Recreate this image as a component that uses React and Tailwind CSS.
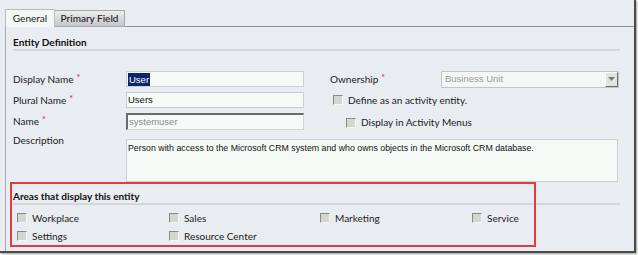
const labelFont = { fontFamily: 'Lato, "Noto Sans", sans-serif' }
const boxFont = { fontFamily: '"Liberation Sans", Arial, sans-serif' }

function Req() {
  return <span className="ml-[3px] text-[#e0262b] text-[9px] relative top-[-2px]">*</span>
}

function Check({ label }) {
  return (
    <div className="flex items-center h-[18px]">
      <span className="block w-[10px] h-[10px] bg-[#d6d6d0] border-t border-l border-[#8a8a86] border-b border-r border-b-[#f4f4f4] border-r-[#f4f4f4] shrink-0" />
      <span className="ml-[5px] text-[10px] text-[#222]">{label}</span>
    </div>
  )
}

function TextBox({ children, disabled }) {
  return (
    <div
      className={
        disabled
          ? 'w-[178px] h-[17px] bg-[#f5faf7] border-t-2 border-l-2 border-[#6b6b6b] border-r border-b border-r-[#d0d4d8] border-b-[#d0d4d8] flex items-center pl-[1px] text-[9.5px] text-[#8a8a8a]'
          : 'w-[178px] h-[16px] bg-[#f5faf7] border border-[#cdd1d5] flex items-center px-[1px] text-[9.5px] text-[#111]'
      }
      style={boxFont}
    >
      {children}
    </div>
  )
}

export default function App() {
  return (
    <div className="w-[638px] h-[255px] bg-white" style={labelFont}>
      <div className="w-[636px] h-[253px] bg-[#e9ecf1] border-r-2 border-b-2 border-[#4b4b4b] shadow-[1px_1px_2px_rgba(0,0,0,0.4)] pl-[5px] pt-[9px] flex flex-col">
        <div className="flex h-[18px] items-end">
          <div className="w-[50px] h-[18px] bg-[#f3f8f5] border border-b-0 border-[#b8bcc0] flex items-center justify-center text-[10px] text-[#222]">
            General
          </div>
          <div className="w-[70px] h-[17px] bg-gradient-to-b from-[#eeeeee] to-[#c4c6c8] border border-l-0 border-[#a4a8ac] flex items-center justify-center text-[10px] font-medium text-[#222]">
            Primary Field
          </div>
          <div className="flex-1 h-[18px] border-b border-[#8d9196]" />
        </div>

        <div className="relative flex-1 border-l border-[#a7abb0] pl-[7px] pt-[8px]">
          <div className="w-[607px] h-[14px] text-[10px] font-bold text-[#111] leading-[14px]">Entity Definition</div>
          <div className="w-[607px] h-[2px] bg-[#d3d7dc]" />

          <div className="mt-[20px] flex h-[16px] items-center">
            <div className="w-[113px] text-[10px] text-[#222]">Display Name<Req /></div>
            <div className="w-[178px] h-[16px] bg-[#f5faf7] border border-[#cdd1d5] flex items-center px-[1px] text-[9.5px]" style={boxFont}>
              <span className="bg-[#0b2768] text-white px-[1px] leading-[13px]">User</span>
            </div>
            <div className="w-[26px]" />
            <div className="w-[111px] text-[10px] text-[#222]">Ownership<Req /></div>
            <div className="w-[178px] h-[17px] bg-[#f5f7f6] border border-[#c2c6ca] flex items-center justify-between pl-[3px] text-[9.5px] text-[#9a9a9a]" style={boxFont}>
              Business Unit
              <div className="w-[13px] h-[15px] bg-[#e3e3e1] border-t border-l border-[#fbfbfb] border-r border-b border-r-[#6e6e6e] border-b-[#6e6e6e] flex items-center justify-center">
                <svg width="7" height="4" viewBox="0 0 7 4"><path d="M0 0h7L3.5 4z" fill="#7a7a7a" /></svg>
              </div>
            </div>
          </div>

          <div className="mt-[5px] flex h-[16px] items-center">
            <div className="w-[113px] text-[10px] text-[#222]">Plural Name<Req /></div>
            <TextBox>Users</TextBox>
            <div className="w-[29px]" />
            <Check label="Define as an activity entity." />
          </div>

          <div className="mt-[5px] flex h-[17px] items-center">
            <div className="w-[113px] text-[10px] text-[#222]">Name<Req /></div>
            <TextBox disabled>systemuser</TextBox>
            <div className="w-[42px]" />
            <div className="mt-[1px] -mb-[1px]">
              <Check label="Display in Activity Menus" />
            </div>
          </div>

          <div className="mt-[4px] flex">
            <div className="w-[113px] text-[10px] text-[#222] leading-[13px]">Description</div>
            <div className="mt-[5px] w-[492px] h-[43px] bg-[#f5faf7] border border-[#cdd1d5] px-[1px] pt-[2px] text-[8.8px] text-[#111]" style={boxFont}>
              Person with access to the Microsoft CRM system and who owns objects in the Microsoft CRM database.
            </div>
          </div>

          <div className="mt-[7px] w-[607px] h-[14px] text-[10px] font-bold text-[#111] leading-[14px]">Areas that display this entity</div>
          <div className="w-[607px] h-[2px] bg-[#d3d7dc]" />

          <div className="mt-[4px] ml-[4px] grid grid-cols-[152px_151px_152px_120px]">
            <Check label="Workplace" />
            <Check label="Sales" />
            <Check label="Marketing" />
            <Check label="Service" />
            <Check label="Settings" />
            <Check label="Resource Center" />
          </div>

          <div className="absolute left-[4px] top-[155px] w-[526px] h-[65px] border-2 border-[#e8383d] pointer-events-none" />
        </div>
      </div>
    </div>
  )
}
